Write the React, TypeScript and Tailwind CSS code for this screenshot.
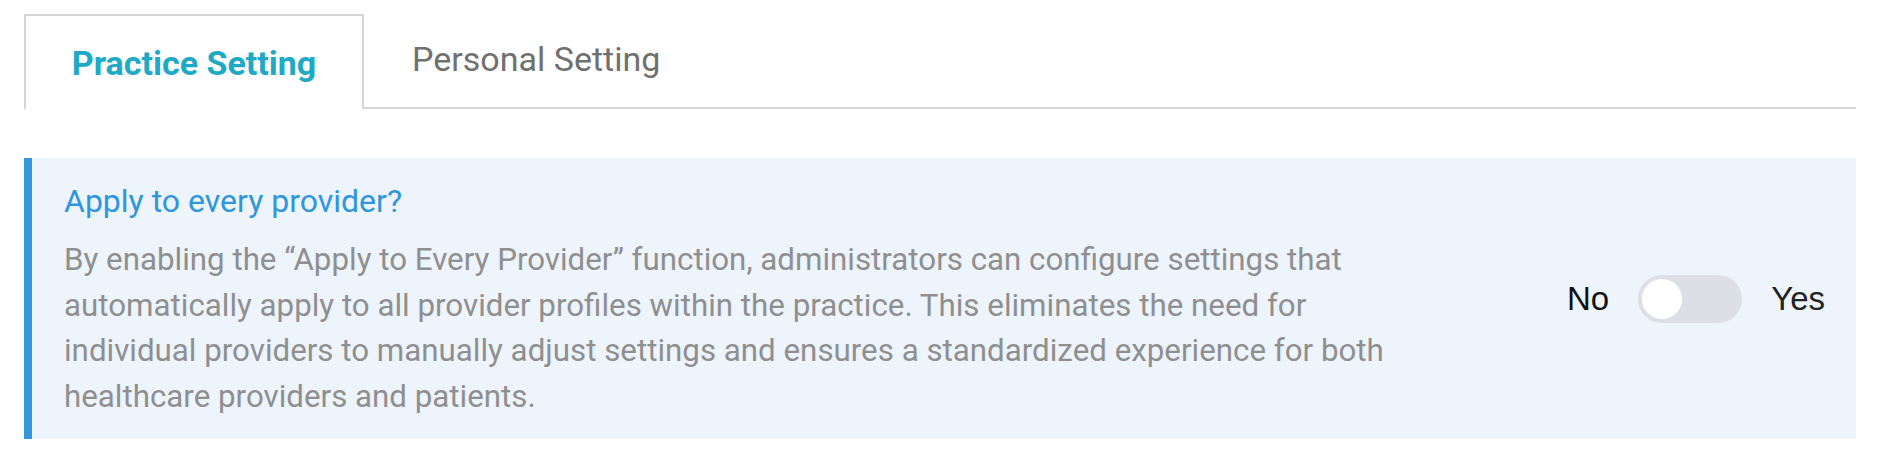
import { useState } from "react";

export default function App() {
  const [applyAll, setApplyAll] = useState(false);

  return (
    <main className="h-[472px] w-full bg-white pl-[24px] pr-[30px] pt-[14px] font-['Roboto',sans-serif]">
      {/* Tabs */}
      <div className="flex items-end">
        <button className="flex h-[95px] w-[340px] items-center justify-center border-x-2 border-t-2 border-[#d6d6d6] pt-[2px] text-[34px] font-bold text-[#20a9c7]">
          Practice Setting
        </button>
        <div className="flex h-[95px] flex-1 items-center border-b-2 border-[#d6d6d6] pb-[2px] pl-[48px]">
          <button className="text-[34px] text-[#707070]">Personal Setting</button>
        </div>
      </div>

      {/* Apply to every provider */}
      <section className="mt-[49px] flex h-[281px] items-center border-l-8 border-[#3497dc] bg-[#edf4fc] pl-[32px] pr-[31px]">
        <div className="flex-1 self-start pt-[23px]">
          <h3 className="text-[32px] leading-[40px] text-[#2f96dc]">Apply to every provider?</h3>
          <p className="mt-[16px] text-[31.3px] leading-[45.5px] text-[#8f8f8f]">
            By enabling the “Apply to Every Provider” function, administrators can configure settings that
            <br />
            automatically apply to all provider profiles within the practice. This eliminates the need for
            <br />
            individual providers to manually adjust settings and ensures a standardized experience for both
            <br />
            healthcare providers and patients.
          </p>
        </div>
        <div className="flex items-center font-['Liberation_Sans',Arial,sans-serif] text-[33px] text-[#111]">
          <span>No</span>
          <button
            onClick={() => setApplyAll(!applyAll)}
            className={`mx-[29px] flex h-[48px] w-[104px] items-center rounded-full p-[4px] ${applyAll ? "justify-end bg-[#3497dc]" : "justify-start bg-[#dcdfe6]"}`}
          >
            <span className="h-[40px] w-[40px] rounded-full bg-white" />
          </button>
          <span className="text-[#222]">Yes</span>
        </div>
      </section>
    </main>
  );
}
